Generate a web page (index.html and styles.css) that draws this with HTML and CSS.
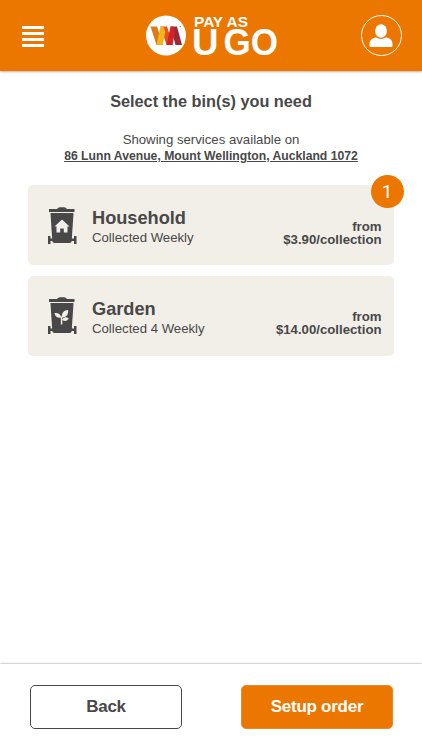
FILE: index.html
```html
<!DOCTYPE html>
<html lang="en">
<head>
  <meta charset="UTF-8">
  <meta name="viewport" content="width=device-width, initial-scale=1.0">
  <title>Pay As U Go</title>
  <link rel="stylesheet" href="styles.css">
</head>
<body>
  <header class="header">
    <button class="menu" type="button" aria-label="Menu">
      <span></span>
      <span></span>
      <span></span>
      <span></span>
    </button>
    <svg class="logo" width="134" height="60" viewBox="0 -8 134 60" role="img" aria-label="Pay As U Go">
      <circle cx="20" cy="21.5" r="20" fill="#fff"/>
      <path d="M4.500 12.500h6.500l6 18.500h-6.500z" fill="#df7a1c"/>
      <path d="M14.500 12.500h6.500l6 18.500h-6.500z" fill="#e5541b"/>
      <path d="M14.500 12.500h3l1.800 5.500-2.800 13h-6z" fill="#f6b21b"/>
      <path d="M24.500 12.500h6.500l5 18.500h-6.500z" fill="#9c2a35"/>
      <path d="M24.500 12.500h2.500l1.800 5.500-2.300 13h-6z" fill="#d3222a"/>
      <circle cx="34.300" cy="12.600" r=".8" fill="#999"/>
      <text class="logo-top" x="48" y="12.700" textLength="54" lengthAdjust="spacingAndGlyphs">PAY AS</text>
      <text class="logo-main" x="46" y="41.200" textLength="26.500" lengthAdjust="spacingAndGlyphs">U</text>
      <text class="logo-main" x="77.500" y="41.200" textLength="54.500" lengthAdjust="spacingAndGlyphs">GO</text>
    </svg>
    <a class="profile" href="#" aria-label="My account">
      <svg width="24" height="24" viewBox="0 0 24 24" fill="#fff">
        <ellipse cx="12" cy="7" rx="5.9" ry="6.7"/>
        <path d="M7 13.300c3 2.200 7 2.200 10 0 4 .9 6.500 3.200 6.500 6.500v1.700q0 1.500-1.500 1.500H2Q.5 23 .5 21.500v-1.700c0-3.300 2.500-5.600 6.500-6.500z"/>
      </svg>
    </a>
  </header>

  <main class="content">
    <h1 class="title">Select the bin(s) you need</h1>
    <p class="intro">Showing services available on</p>
    <a class="address" href="#">86 Lunn Avenue, Mount Wellington, Auckland 1072</a>

    <div class="bins">
      <div class="bin">
        <svg class="bin-icon" width="30" height="38" viewBox="0 0 30 38">
          <path d="M2 2h8q1-1.700 3-1.700h4q2 0 3 1.700h7.500v3H2z" fill="#484848"/>
          <path d="M3.500 6h23L24.700 34q-.2 2-2 2H7.300q-1.800 0-2-2z" fill="#484848"/>
          <path d="M1 29h2.500v2.500H6V34H3.500v3H1zM29.500 29H27v2.500h-3V34h3v3h2.500z" fill="#484848"/>
          <path d="M15 12.500l7.500 7h-2v6h-3.700v-4h-3.600v4H9.500v-6h-2z" fill="#f2efe9"/>
        </svg>
        <div class="bin-info">
          <h2>Household</h2>
          <p>Collected Weekly</p>
        </div>
        <div class="bin-price">from<br>$3.90/collection</div>
        <span class="badge">1</span>
      </div>
      <div class="bin">
        <svg class="bin-icon" width="30" height="38" viewBox="0 0 30 38">
          <path d="M2 2h8q1-1.700 3-1.700h4q2 0 3 1.700h7.500v3H2z" fill="#484848"/>
          <path d="M3.500 6h23L24.700 34q-.2 2-2 2H7.300q-1.800 0-2-2z" fill="#484848"/>
          <path d="M1 29h2.500v2.500H6V34H3.500v3H1zM29.500 29H27v2.500h-3V34h3v3h2.500z" fill="#484848"/>
          <path d="M14.600 27.500v-8" fill="none" stroke="#f2efe9" stroke-width="1.500"/>
          <path d="M14.900 20.500c-.4-4.500 1.800-7.300 6.300-7.500.4 4.500-1.800 7.500-6.300 7.500zM14.200 20.800c-4.200.4-6.300-1.300-6.700-4.800 4-.4 6.400 1.300 6.700 4.800zM15.200 22.700c1.700-2.700 4-3.200 6.500-1.200-1.400 2.800-4 3.300-6.500 1.200z" fill="#f2efe9"/>
        </svg>
        <div class="bin-info">
          <h2>Garden</h2>
          <p>Collected 4 Weekly</p>
        </div>
        <div class="bin-price">from<br>$14.00/collection</div>
      </div>
    </div>
  </main>

  <footer class="footer">
    <button class="btn" type="button">Back</button>
    <button class="btn btn-primary" type="button">Setup order</button>
  </footer>
</body>
</html>
```

FILE: styles.css
```css
* {
  box-sizing: border-box;
}
body {
  margin: 0;
  height: 100vh;
  display: flex;
  flex-direction: column;
  font-family: "Liberation Sans", Arial, sans-serif;
  background-color: #fff;
  color: #484848;
}
h1, h2, p {
  margin: 0;
}
.header {
  height: 71px;
  flex: none;
  display: flex;
  align-items: center;
  justify-content: space-between;
  padding: 0 20px 0 22px;
  background-color: #eb7700;
  box-shadow: 0 1px 2px rgba(0, 0, 0, 0.3);
}
.menu {
  display: flex;
  flex-direction: column;
  gap: 3px;
  width: 22px;
  padding: 1px 0 0;
  border: none;
  background: none;
  cursor: pointer;
}
.menu span {
  height: 3px;
  background-color: #fff;
}
.logo {
  margin-left: 22px;
}
.logo-top {
  font-size: 15px;
  font-weight: bold;
  fill: #fff;
}
.logo-main {
  font-size: 36px;
  font-weight: bold;
  fill: #fff;
}
.profile {
  display: flex;
  align-items: center;
  justify-content: center;
  width: 41px;
  height: 41px;
  margin: 0 0.5px 1px 0;
  border: 1px solid #fff;
  border-radius: 50%;
}
.profile svg {
  margin-top: 2px;
}
.content {
  flex: 1;
  padding: 20px 28px 0;
  text-align: center;
}
.title {
  font-size: 16.3px;
  line-height: 20px;
}
.intro {
  margin-top: 21px;
  font-size: 13.2px;
  line-height: 16px;
}
.address {
  display: block;
  font-size: 12.2px;
  font-weight: bold;
  line-height: 16px;
  color: #484848;
}
.bins {
  display: flex;
  flex-direction: column;
  gap: 10.5px;
  margin-top: 21px;
}
.bin {
  position: relative;
  display: flex;
  align-items: center;
  height: 80px;
  padding: 0 12.5px 0 19px;
  border-radius: 5px;
  background-color: #f2efe9;
  text-align: left;
}
.bin-icon {
  margin: 1px 15px 0 0;
}
.bin-info {
  flex: 1;
  padding-top: 4px;
}
.bin-info h2 {
  font-size: 18.2px;
  line-height: 22px;
}
.bin-info p {
  font-size: 13.2px;
  line-height: 18px;
}
.bin-price {
  padding-top: 15px;
  font-size: 13.2px;
  font-weight: bold;
  line-height: 13px;
  text-align: right;
}
.badge {
  position: absolute;
  top: -10px;
  right: -9.5px;
  width: 33px;
  height: 33px;
  border-radius: 50%;
  background-color: #eb7700;
  color: #fff;
  font-family: Roboto, sans-serif;
  font-size: 19px;
  line-height: 33px;
  text-align: center;
}
.footer {
  flex: none;
  display: flex;
  justify-content: space-between;
  height: 86px;
  padding: 21px 29px 0 30px;
  box-shadow: 0 0 2px rgba(0, 0, 0, 0.5);
}
.btn {
  width: 152px;
  height: 44px;
  padding: 0 0 1px;
  border: 1px solid #484848;
  border-radius: 5px;
  background-color: #fff;
  color: #484848;
  font-family: inherit;
  font-size: 17px;
  font-weight: bold;
  letter-spacing: -0.25px;
  cursor: pointer;
}
.btn-primary {
  border-color: #e88a2c;
  background-color: #eb7700;
  color: #fff;
}
```
